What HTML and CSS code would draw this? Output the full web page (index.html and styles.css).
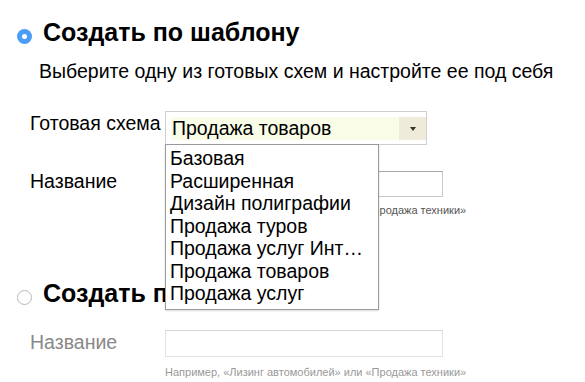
FILE: index.html
```html
<!DOCTYPE html>
<html lang="ru">
<head>
  <meta charset="UTF-8">
  <title>Создание сайта</title>
  <link rel="stylesheet" href="styles.css">
</head>
<body>

  <div class="option">
    <div class="option-head">
      <span class="radio checked"></span>
      <h2>Создать по шаблону</h2>
    </div>
    <p class="lead">Выберите одну из готовых схем и настройте ее под себя</p>

    <div class="field field-select">
      <label>Готовая схема</label>
      <div class="select">
        <span class="select-value">Продажа товаров</span>
        <span class="select-arrow"></span>

        <!-- открытый список -->
        <ul class="dropdown">
          <li>Базовая</li>
          <li>Расширенная</li>
          <li>Дизайн полиграфии</li>
          <li>Продажа туров</li>
          <li>Продажа услуг Инт…</li>
          <li>Продажа товаров</li>
          <li>Продажа услуг</li>
        </ul>
      </div>
    </div>

    <div class="field">
      <label>Название</label>
      <div class="control">
        <div class="input"></div>
        <div class="hint">Например, «Лизинг автомобилей» или «Продажа техники»</div>
      </div>
    </div>
  </div>

  <div class="option option-off">
    <div class="option-head">
      <span class="radio"></span>
      <h2>Создать пустой сайт</h2>
    </div>

    <div class="field">
      <label>Название</label>
      <div class="control">
        <div class="input"></div>
        <div class="hint">Например, «Лизинг автомобилей» или «Продажа техники»</div>
      </div>
    </div>
  </div>

</body>
</html>
```

FILE: styles.css
```css
body {
  margin: 0;
  font-family: "Liberation Sans", Arial, sans-serif;
  font-size: 19.5px;
  color: #000;
  background: #fff;
}

/* Блок варианта */
.option-head {
  display: flex;
  align-items: center;
  margin-top: 18px;
  padding-left: 17px;
}

.option-head h2 {
  margin: 0 0 0 11px;
  font-size: 25px;
  line-height: 28px;
  font-weight: bold;
}

.radio {
  width: 15px;
  height: 15px;
  margin-top: 8px;
  border-radius: 50%;
  border: 1px solid #b9b9b9;
  box-sizing: border-box;
  background: #fff;
  position: relative;
}

.radio.checked {
  border: none;
  background: #4a9cf6;
}

.radio.checked::after {
  content: "";
  position: absolute;
  left: 5px;
  top: 5px;
  width: 5px;
  height: 5px;
  border-radius: 50%;
  background: #fff;
}

.lead {
  margin: 14px 0 0;
  padding-left: 39px;
  line-height: 22px;
}

/* Поля */
.field {
  display: flex;
  align-items: flex-start;
  padding-left: 30px;
  margin-top: 26px;
}

.field-select {
  margin-top: 29px;
}

.field label {
  width: 135px;
  flex-shrink: 0;
  line-height: 22px;
  margin-top: -1px;
}

.field-select label {
  margin-top: 0;
  padding-top: 1px;
}

.control {
  width: 278px;
}

.input {
  height: 26px;
  box-sizing: border-box;
  border: 1px solid #c8c8c8;
  border-top-color: #a9a9a9;
}

.hint {
  margin-top: 6px;
  font-size: 11px;
  line-height: 14px;
  color: #555;
  white-space: nowrap;
}

/* Выпадающий список */
.select {
  position: relative;
  display: flex;
  width: 262px;
  box-sizing: border-box;
  border: 1px solid #cfcfcf;
  padding: 5px 0 4px 5px;
}

.select-value {
  flex: 1;
  height: 23px;
  line-height: 23px;
  padding-left: 1px;
  background: #f9fde8;
}

.select-arrow {
  width: 27px;
  height: 23px;
  background: #eeebdb;
  position: relative;
}

.select-arrow::after {
  content: "";
  position: absolute;
  left: 11px;
  top: 10px;
  border-left: 3px solid transparent;
  border-right: 3px solid transparent;
  border-top: 4px solid #333;
}

.dropdown {
  position: absolute;
  top: 100%;
  left: -1px;
  z-index: 10;
  width: 214px;
  box-sizing: border-box;
  margin: 0;
  padding: 2px 0 4px 4px;
  list-style: none;
  background: #fff;
  border: 1px solid #9a9a9a;
  box-shadow: 0 1px 2px rgba(0,0,0,0.15);
}

.dropdown li {
  line-height: 22.5px;
  white-space: nowrap;
}

/* Второй, неактивный вариант */
.option-off .option-head {
  margin-top: 62px;
}

.option-off .field {
  margin-top: 23px;
}

.option-off label {
  color: #888;
  margin-top: 0;
  padding-top: 1px;
}

.option-off .input {
  height: 27px;
  border-color: #e2e2e2;
  border-top-color: #d4d4d4;
}

.option-off .hint {
  margin-top: 8px;
  color: #999;
}
```
